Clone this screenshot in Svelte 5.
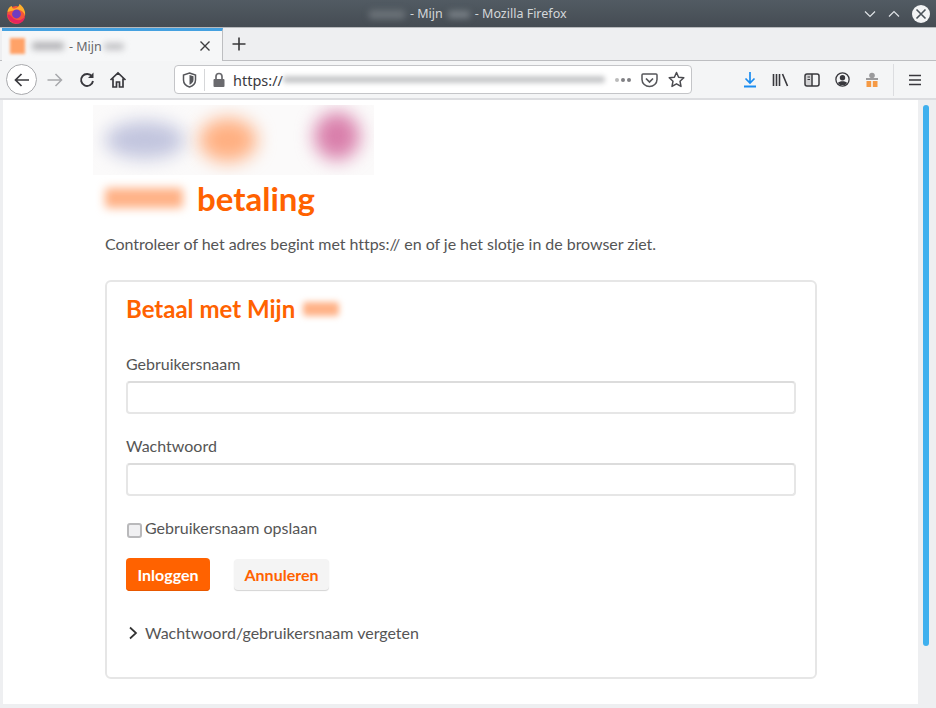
<script>
  const toolbarRight = ["library", "sidebar", "account", "ext"];
</script>

<div class="window">
  <header class="titlebar">
    <svg class="ff-logo" width="22" height="22" viewBox="0 0 22 22">
      <circle cx="11" cy="12" r="9" fill="#f5553a" />
      <path d="M2.5 9 C3 5 5 3.5 7 3 C6.5 5 8 6 10 5.5 C13 5 14 3 14.5 1 C18 3.5 21 8 20 13 C19.5 9 15 6 11 7 C7 8 5 8 2.5 9Z" fill="#ffaf2c" />
      <circle cx="11.5" cy="11" r="4.4" fill="#6f3cc0" />
      <path d="M2.2 11.5 C3 18 9 21.5 14 20.5 C18 19.5 20 16 20 13 C18 18 11 18.5 7.5 14.5 C6 12.5 5 11 2.2 11.5Z" fill="#e6245f" />
    </svg>
    <div class="window-title">
      <span class="blur-text small-grey"></span>
      <span>- Mijn</span>
      <span class="blur-text tiny-grey"></span>
      <span>- Mozilla Firefox</span>
    </div>
    <div class="window-btns">
      <svg width="14" height="14" viewBox="0 0 14 14"><path d="M2 4.5 L7 9.5 L12 4.5" fill="none" stroke="#dfe3e6" stroke-width="1.2" /></svg>
      <svg width="14" height="14" viewBox="0 0 14 14"><path d="M2 9.5 L7 4.5 L12 9.5" fill="none" stroke="#dfe3e6" stroke-width="1.2" /></svg>
      <div class="close-btn">
        <svg width="18" height="18" viewBox="0 0 18 18"><path d="M4.5 4.5 L13.5 13.5 M13.5 4.5 L4.5 13.5" stroke="#4a5259" stroke-width="1.6" /></svg>
      </div>
    </div>
  </header>

  <div class="tabstrip">
    <div class="tab">
      <span class="favicon"></span>
      <span class="blur-text tab-a"></span>
      <span class="tab-label">- Mijn</span>
      <span class="blur-text tab-b"></span>
      <svg class="tab-close" width="12" height="12" viewBox="0 0 12 12"><path d="M1.5 1.5 L10.5 10.5 M10.5 1.5 L1.5 10.5" stroke="#3d3d3f" stroke-width="1.4" /></svg>
    </div>
    <div class="newtab">
      <svg width="16" height="16" viewBox="0 0 16 16"><path d="M8 1.5 V14.5 M1.5 8 H14.5" stroke="#38383a" stroke-width="1.6" /></svg>
    </div>
  </div>

  <nav class="toolbar">
    <div class="back">
      <svg width="18" height="18" viewBox="0 0 18 18"><path d="M16 9 H2.5 M8.5 3 L2.5 9 L8.5 15" fill="none" stroke="#38383d" stroke-width="1.7" /></svg>
    </div>
    <svg class="tool" width="18" height="18" viewBox="0 0 18 18"><path d="M1.5 9 H15.5 M9.5 3 L15.5 9 L9.5 15" fill="none" stroke="#a8a9ac" stroke-width="1.5" /></svg>
    <svg class="tool" width="18" height="18" viewBox="0 0 18 18"><path d="M14 5.5 A6 6 0 1 0 15 10" fill="none" stroke="#38383d" stroke-width="1.9" /><path d="M15.5 1.5 V7 H10 Z" fill="#38383d" /></svg>
    <svg class="tool" width="18" height="18" viewBox="0 0 18 18"><path d="M1.5 9 L9 2 L16.5 9 M4 7.5 V16 H7.5 V11 H10.5 V16 H14 V7.5" fill="none" stroke="#38383d" stroke-width="1.7" /></svg>

    <div class="urlbar">
      <svg width="15" height="16" viewBox="0 0 15 16"><path d="M7.5 1 L13.5 3 V8 C13.5 11.5 10.5 14 7.5 15 C4.5 14 1.5 11.5 1.5 8 V3 Z" fill="none" stroke="#55565a" stroke-width="1.5" /><path d="M7.5 3 L11.5 4.3 V8 C11.5 10 9.5 12 7.5 12.8 Z" fill="#55565a" /></svg>
      <span class="url-sep"></span>
      <svg width="14" height="16" viewBox="0 0 14 16"><rect x="1.5" y="7" width="11" height="8" rx="1" fill="#6a6a6e" /><path d="M4 7 V4.5 A3 3 0 0 1 10 4.5 V7" fill="none" stroke="#6a6a6e" stroke-width="1.7" /></svg>
      <span class="url-text">https://</span>
      <span class="blur-text url-blur"></span>
      <span class="dots"><i></i><i></i><i></i></span>
      <svg width="17" height="16" viewBox="0 0 17 16"><path d="M2 2 H15 Q16 2 16 3 V7.5 C16 11.5 12.5 14.5 8.5 14.5 C4.5 14.5 1 11.5 1 7.5 V3 Q1 2 2 2 Z" fill="none" stroke="#55565a" stroke-width="1.5" /><path d="M5 6.5 L8.5 10 L12 6.5" fill="none" stroke="#55565a" stroke-width="1.7" /></svg>
      <svg width="17" height="17" viewBox="0 0 17 17"><path d="M8.5 1.5 L10.6 6.2 L15.8 6.8 L12 10.2 L13 15.4 L8.5 12.8 L4 15.4 L5 10.2 L1.2 6.8 L6.4 6.2 Z" fill="none" stroke="#4a4a4f" stroke-width="1.5" stroke-linejoin="round" /></svg>
    </div>

    <div class="tools-right">
      <svg width="14" height="17" viewBox="0 0 14 17"><path d="M7 1 V11.5 M2.5 7.5 L7 12 L11.5 7.5" fill="none" stroke="#1a8cf0" stroke-width="1.7" /><path d="M1 15.5 H13" stroke="#1a8cf0" stroke-width="2" /></svg>
      {#each toolbarRight as name}
        {#if name === "library"}
          <svg width="17" height="14" viewBox="0 0 17 14"><path d="M1.5 1 V13 M4.5 1 V13 M7.5 1 V13 M10.5 1 L15.5 13" fill="none" stroke="#38383d" stroke-width="1.6" /></svg>
        {:else if name === "sidebar"}
          <svg width="16" height="14" viewBox="0 0 16 14"><rect x="1" y="1" width="14" height="12" rx="2" fill="none" stroke="#38383d" stroke-width="1.5" /><rect x="1.5" y="1.5" width="6" height="11" fill="#38383d" opacity="0.18" /><path d="M8 1 V13" stroke="#38383d" stroke-width="1.5" /><path d="M3.5 4 H6 M3.5 6.5 H6" stroke="#38383d" /></svg>
        {:else if name === "account"}
          <svg width="15" height="15" viewBox="0 0 15 15"><circle cx="7.5" cy="7.5" r="6.6" fill="none" stroke="#38383d" stroke-width="1.3" /><circle cx="7.5" cy="5.8" r="2.7" fill="#38383d" /><path d="M2.8 11 C4.5 8.5 10.5 8.5 12.2 11 L10 13 H5 Z" fill="#38383d" /></svg>
        {:else}
          <svg width="14" height="15" viewBox="0 0 14 15"><circle cx="7" cy="3.5" r="2.8" fill="#9a9a9c" /><path d="M1 6 H13 V8 H1 Z" fill="#9a9a9c" /><rect x="1.5" y="9" width="4.7" height="6" fill="#f59a45" /><rect x="7.8" y="9" width="4.7" height="6" fill="#f59a45" /></svg>
        {/if}
      {/each}
    </div>
    <span class="tool-sep"></span>
    <svg class="menu" width="14" height="12" viewBox="0 0 14 12"><path d="M1 1.5 H13 M1 6 H13 M1 10.5 H13" stroke="#38383d" stroke-width="1.7" /></svg>
  </nav>

  <div class="viewport">
    <main class="page">
      <div class="logos">
        <span class="blob blue"></span>
        <span class="blob orange"></span>
        <span class="blob pink"></span>
      </div>

      <h1><span class="blur-text h1-blur"></span>betaling</h1>
      <p class="intro">Controleer of het adres begint met https:// en of je het slotje in de browser ziet.</p>

      <section class="card">
        <h2>Betaal met Mijn<span class="blur-text h2-blur"></span></h2>

        <label for="user">Gebruikersnaam</label>
        <input id="user" type="text" />

        <label for="pass">Wachtwoord</label>
        <input id="pass" type="password" />

        <div class="remember">
          <span class="checkbox"></span>
          <span>Gebruikersnaam opslaan</span>
        </div>

        <div class="buttons">
          <button class="primary">Inloggen</button>
          <button class="secondary">Annuleren</button>
        </div>

        <div class="forgot">
          <svg width="10" height="14" viewBox="0 0 10 14"><path d="M2 1.5 L8 7 L2 12.5" fill="none" stroke="#333" stroke-width="1.7" /></svg>
          <span>Wachtwoord/gebruikersnaam vergeten</span>
        </div>
      </section>
    </main>
    <aside class="scrollbar"><div class="thumb"></div></aside>
  </div>
</div>

<style>
  :global(body) {
    margin: 0;
    background: #eeeff1;
  }
  .window {
    width: 936px;
    height: 708px;
    display: flex;
    flex-direction: column;
    overflow: hidden;
    font-family: "Lato", "Noto Sans", sans-serif;
    background: #eeeff1;
  }
  .titlebar {
    height: 27px;
    flex: none;
    display: flex;
    align-items: center;
    position: relative;
    background: linear-gradient(#525b63, #454c53);
    border-bottom: 1px solid #b8babd;
  }
  .ff-logo {
    margin-left: 5px;
  }
  .window-title {
    position: absolute;
    left: 369px;
    top: 6px;
    display: flex;
    align-items: center;
    gap: 5px;
    font-family: "Noto Sans", sans-serif;
    font-size: 12.5px;
    line-height: 16px;
    color: #d4d7da;
  }
  .window-btns {
    margin-left: auto;
    margin-right: 6px;
    display: flex;
    align-items: center;
    gap: 10px;
  }
  .close-btn {
    width: 18px;
    height: 18px;
    border-radius: 50%;
    background: #f3f4f5;
    margin-left: 1px;
    display: flex;
  }
  .blur-text {
    display: inline-block;
    filter: blur(3px);
    border-radius: 3px;
  }
  .small-grey {
    width: 36px;
    height: 9px;
    background: #6a7177;
  }
  .tiny-grey {
    width: 22px;
    height: 7px;
    background: #7a8187;
  }

  .tabstrip {
    height: 33px;
    flex: none;
    display: flex;
    background: #eeeff1;
    border-bottom: 1px solid #bdbec1;
    box-sizing: border-box;
  }
  .tab {
    width: 221px;
    margin-left: 2px;
    height: 33px;
    box-sizing: border-box;
    display: flex;
    align-items: center;
    background: #f6f7f8;
    border-top: 3px solid #45a1e0;
    border-right: 1px solid #bdbec1;
    padding-left: 8px;
    font-family: "Noto Sans", sans-serif;
    font-size: 12.5px;
    color: #66676b;
  }
  .favicon {
    width: 15px;
    height: 16px;
    background: #ffa268;
    filter: blur(1.8px);
    margin-right: 7px;
  }
  .tab-a {
    width: 32px;
    height: 8px;
    background: #b5b5b8;
    margin-right: 5px;
  }
  .tab-label {
    margin-right: 2px;
  }
  .tab-b {
    width: 20px;
    height: 7px;
    background: #c2c2c5;
  }
  .tab-close {
    margin-left: auto;
    margin-right: 11px;
  }
  .newtab {
    width: 32px;
    display: flex;
    align-items: center;
    justify-content: center;
  }

  .toolbar {
    height: 39px;
    flex: none;
    box-sizing: border-box;
    display: flex;
    align-items: center;
    background: #f4f5f6;
    border-bottom: 2px solid #dcdde0;
    padding-left: 6px;
  }
  .back {
    width: 31px;
    height: 31px;
    box-sizing: border-box;
    border: 1px solid #a9aaad;
    border-radius: 50%;
    background: #fff;
    display: flex;
    align-items: center;
    justify-content: center;
    flex: none;
  }
  .tool {
    margin-left: 13.5px;
    flex: none;
  }
  .tool:first-of-type {
    margin-left: 9px;
  }
  .urlbar {
    margin-left: 47px;
    width: 518px;
    height: 29px;
    box-sizing: border-box;
    flex: none;
    display: flex;
    align-items: center;
    background: #fff;
    border: 1px solid #c4c5c8;
    border-radius: 4px;
    padding: 0 6px 0 7px;
    color: #4a4a4f;
  }
  .url-sep {
    width: 1px;
    height: 22px;
    background: #d6d7d9;
    margin: 0 7px;
  }
  .url-text {
    font-family: "Noto Sans", sans-serif;
    font-size: 14.5px;
    margin-left: 7px;
    color: #3a3a3e;
  }
  .url-blur {
    width: 322px;
    height: 7px;
    background: #c6c7c9;
    margin-left: 0;
    filter: blur(2.5px);
    flex: none;
  }
  .dots {
    display: flex;
    gap: 2px;
    margin: 0 10px 0 auto;
  }
  .dots i {
    width: 4px;
    height: 4px;
    border-radius: 50%;
    background: #808084;
  }
  .dots i:first-child {
    background: #bbb;
  }
  .urlbar > svg:last-child {
    margin-left: 10px;
  }
  .tools-right {
    margin-left: 51px;
    display: flex;
    align-items: center;
    gap: 15px;
  }
  .tool-sep {
    width: 1px;
    height: 32px;
    background: #dcdde0;
    margin-left: 14px;
  }
  .menu {
    margin-left: 14px;
  }

  .viewport {
    height: 605px;
    flex: none;
    display: flex;
  }
  .page {
    width: 915px;
    margin-left: 3px;
    height: 604px;
    background: #fff;
    box-sizing: border-box;
    padding: 5px 0 0 102px;
    overflow: hidden;
    color: #555;
  }
  .logos {
    width: 281px;
    height: 70px;
    margin-left: -12px;
    display: flex;
    align-items: center;
    background: #fbfafa;
    overflow: hidden;
  }
  .blob {
    display: block;
    flex: none;
    filter: blur(9px);
    border-radius: 50%;
  }
  .blue {
    width: 80px;
    height: 38px;
    background: #c2c5de;
    margin-left: 12px;
  }
  .orange {
    width: 58px;
    height: 44px;
    background: #ffb082;
    margin-left: 14px;
  }
  .pink {
    width: 46px;
    height: 48px;
    background: #d97fab;
    margin-left: 57px;
    margin-top: -8px;
  }
  h1 {
    margin: 4px 0 0;
    font-size: 33px;
    line-height: 38px;
    font-weight: 700;
    color: #ff6200;
    display: flex;
    align-items: center;
  }
  .h1-blur {
    width: 78px;
    height: 20px;
    background: #ffb287;
    margin-right: 14px;
    filter: blur(5px);
  }
  .intro {
    margin: 15px 0 0;
    font-size: 16px;
    line-height: 24px;
    letter-spacing: -0.04px;
    white-space: nowrap;
  }
  .card {
    margin-top: 24px;
    width: 712px;
    height: 399px;
    box-sizing: border-box;
    border: 2px solid #e6e6e6;
    border-radius: 6px;
    padding: 12px 19px 0;
    background: #fff;
  }
  h2 {
    margin: 0;
    font-size: 24px;
    line-height: 30px;
    font-weight: 700;
    color: #ff6200;
    display: flex;
    align-items: center;
  }
  .h2-blur {
    width: 36px;
    height: 14px;
    background: #ffb287;
    margin-left: 8px;
  }
  label {
    display: block;
    font-size: 16px;
    line-height: 24px;
  }
  label[for="user"] {
    margin-top: 28px;
  }
  label[for="pass"] {
    margin-top: 20px;
  }
  input {
    display: block;
    margin-top: 5px;
    width: 670px;
    height: 33px;
    box-sizing: border-box;
    border: 2px solid #e6e6e6;
    border-top-color: #dcdcdc;
    border-radius: 4px;
    background: #fff;
    padding: 0;
  }
  .remember {
    margin-top: 20px;
    display: flex;
    align-items: center;
    font-size: 16px;
    line-height: 24px;
    height: 24px;
    margin-left: 1px;
    gap: 3px;
  }
  .checkbox {
    width: 15px;
    height: 15px;
    margin-top: 4px;
    box-sizing: border-box;
    border: 2px solid #b9b9bb;
    border-radius: 3px;
    background: #f0f0f2;
  }
  .buttons {
    margin-top: 18px;
    display: flex;
    align-items: center;
    gap: 24px;
  }
  button {
    font-family: inherit;
    font-size: 16px;
    font-weight: 700;
    border: none;
    border-radius: 4px;
    padding: 0;
    height: 33px;
  }
  .primary {
    width: 84px;
    background: #ff6200;
    color: #fff;
    box-shadow: inset 0 -1px 0 #e85800;
  }
  .secondary {
    width: 95px;
    height: 31px;
    background: #f4f4f4;
    color: #ff6200;
    box-shadow: 0 1px 1px #d4d4d4;
  }
  .forgot {
    margin-top: 30px;
    display: flex;
    align-items: center;
    gap: 7px;
    font-size: 16px;
    line-height: 24px;
  }
  .forgot svg {
    margin-left: 2px;
  }

  .scrollbar {
    flex: 1;
    padding-left: 5px;
  }
  .thumb {
    width: 6px;
    height: 541px;
    margin-top: 5px;
    border-radius: 3px;
    background: #3fb0ee;
  }
</style>
